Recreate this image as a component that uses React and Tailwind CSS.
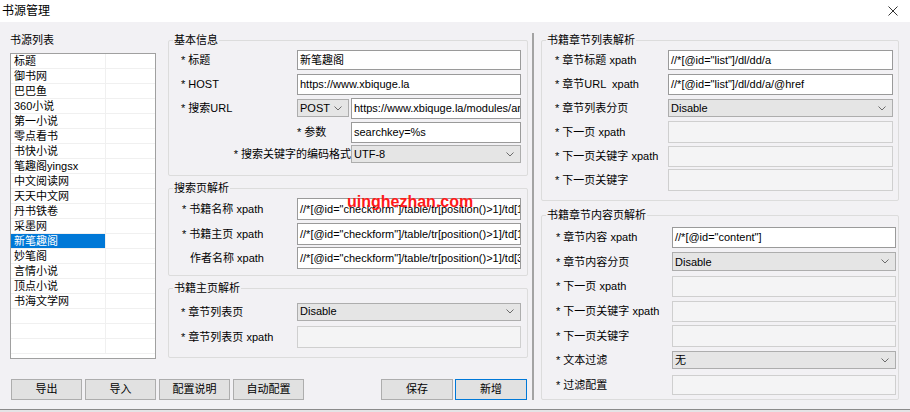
import React from "react";

const listItems = [
  "标题",
  "御书网",
  "巴巴鱼",
  "360小说",
  "第一小说",
  "零点看书",
  "书快小说",
  "笔趣阁yingsx",
  "中文阅读网",
  "天天中文网",
  "丹书铁卷",
  "采墨网",
  "新笔趣阁",
  "妙笔阁",
  "言情小说",
  "顶点小说",
  "书海文学网",
];

function Chevron() {
  return (
    <svg width="8" height="5" viewBox="0 0 8 5" className="shrink-0">
      <polyline points="0.5,0.5 4,4 7.5,0.5" fill="none" stroke="#6b6b6b" strokeWidth="1" />
    </svg>
  );
}

function TextBox({ value, className = "" }) {
  return (
    <div
      className={
        "flex min-w-0 items-center overflow-hidden whitespace-nowrap border border-[#9a9a9a] bg-white pl-[2px] " +
        className
      }
    >
      <span className="whitespace-pre">{value}</span>
    </div>
  );
}

function SelectBox({ value, className = "" }) {
  return (
    <div
      className={
        "flex min-w-0 items-center justify-between overflow-hidden whitespace-nowrap border border-[#adadad] bg-[#e5e5e5] pl-[2px] pr-[6px] " +
        className
      }
    >
      <span>{value}</span>
      <Chevron />
    </div>
  );
}

function Disabled({ className = "" }) {
  return <div className={"min-w-0 border border-[#cfcfcf] bg-[#f4f4f5] " + className} />;
}

function Label({ children, className = "" }) {
  return <div className={"shrink-0 whitespace-pre leading-[16px] " + className}>{children}</div>;
}

function Group({ title, className = "", children }) {
  return (
    <fieldset className={"min-w-0 rounded-[2px] border border-[#dcdcdc] " + className}>
      <legend className="ml-[4px] px-[1px] text-[11px] leading-[16px]">{title}</legend>
      {children}
    </fieldset>
  );
}

function Btn({ children, className = "" }) {
  return (
    <div
      className={
        "flex h-[21px] items-center justify-center border bg-[#e1e1e1] text-[11px] " + className
      }
    >
      {children}
    </div>
  );
}

export default function App() {
  const rows = [];
  for (let i = 0; i < 20; i++) {
    const name = listItems[i] || "";
    const sel = i === 12;
    rows.push(
      <div key={i} className="flex h-[15px] shrink-0 border-b border-[#f0f0f0]">
        <div
          className={
            "flex w-[95px] items-center border-r border-[#f0f0f0] pl-[3px] leading-[14px] " +
            (sel ? "bg-[#0078d7] text-white" : "")
          }
        >
          {name}
        </div>
        <div className="flex-1" />
      </div>
    );
  }

  return (
    <div className="relative flex h-[412px] w-[910px] flex-col overflow-hidden bg-[#f2f1f4] font-['Liberation_Sans','Noto_Sans_CJK_SC',sans-serif] text-[11px] text-black">
      {/* title bar */}
      <div className="flex h-[22px] shrink-0 items-center justify-between bg-white pl-[2px] pr-[12px]">
        <span className="text-[12px] leading-[16px]">书源管理</span>
        <svg width="10" height="10" viewBox="0 0 10 10">
          <line x1="0.5" y1="0.5" x2="9.5" y2="9.5" stroke="#333" strokeWidth="1" />
          <line x1="9.5" y1="0.5" x2="0.5" y2="9.5" stroke="#333" strokeWidth="1" />
        </svg>
      </div>

      {/* main */}
      <div className="flex h-[387px] shrink-0">
        {/* left + middle */}
        <div className="flex w-[532px] shrink-0 flex-col">
          <div className="flex">
            {/* list */}
            <div className="ml-[10px] mt-[10px] flex w-[146px] shrink-0 flex-col">
              <div className="leading-[16px]">书源列表</div>
              <div className="mt-[5px] flex h-[306px] flex-col overflow-hidden border border-[#a0a0a0] bg-white">
                {rows}
              </div>
            </div>

            {/* middle groups */}
            <div className="ml-[12px] mt-[10px] flex w-[360px] shrink-0 flex-col">
              <Group title="基本信息" className="h-[144px]">
                <div className="flex flex-col pl-[12px] pr-[6px]">
                  <div className="flex h-[24px] items-center">
                    <Label className="w-[116px]">* 标题</Label>
                    <TextBox value="新笔趣阁" className="h-[20px] flex-1" />
                  </div>
                  <div className="flex h-[24px] items-center">
                    <Label className="w-[116px]">* HOST</Label>
                    <TextBox value="https://www.xbiquge.la" className="h-[21px] flex-1" />
                  </div>
                  <div className="flex h-[24px] items-center">
                    <Label className="w-[116px]">* 搜索URL</Label>
                    <SelectBox value="POST" className="h-[18px] w-[52px] shrink-0" />
                    <TextBox
                      value="https://www.xbiquge.la/modules/article/search.php"
                      className="ml-[2px] h-[21px] flex-1"
                    />
                  </div>
                  <div className="flex h-[24px] items-center">
                    <div className="w-[116px] shrink-0" />
                    <Label className="w-[54px]">* 参数</Label>
                    <TextBox value="searchkey=%s" className="h-[21px] flex-1" />
                  </div>
                  <div className="flex h-[20px] items-center">
                    <Label className="w-[170px] text-right">* 搜索关键字的编码格式</Label>
                    <SelectBox value="UTF-8" className="h-[18px] flex-1" />
                  </div>
                </div>
              </Group>

              <Group title="搜索页解析" className="mt-[4px] h-[96px]">
                <div className="flex flex-col pl-[13px] pr-[6px] pt-[1px]">
                  <div className="flex h-[24.5px] items-center">
                    <Label className="w-[115px]">* 书籍名称 xpath</Label>
                    <TextBox
                      value={'//*[@id="checkform"]/table/tr[position()>1]/td[1]/a'}
                      className="h-[22px] flex-1"
                    />
                  </div>
                  <div className="flex h-[24.5px] items-center">
                    <Label className="w-[115px]">* 书籍主页 xpath</Label>
                    <TextBox
                      value={'//*[@id="checkform"]/table/tr[position()>1]/td[1]/a/@href'}
                      className="h-[22px] flex-1"
                    />
                  </div>
                  <div className="flex h-[24.5px] items-center">
                    <Label className="w-[115px] pl-[8px]">作者名称 xpath</Label>
                    <TextBox
                      value={'//*[@id="checkform"]/table/tr[position()>1]/td[3]'}
                      className="h-[22px] flex-1"
                    />
                  </div>
                </div>
              </Group>

              <Group title="书籍主页解析" className="mt-[4px] h-[78px]">
                <div className="flex flex-col pl-[12px] pr-[6px] pt-[3px]">
                  <div className="flex h-[25px] items-center">
                    <Label className="w-[116px]">* 章节列表页</Label>
                    <SelectBox value="Disable" className="h-[18px] flex-1" />
                  </div>
                  <div className="flex h-[25px] items-center">
                    <Label className="w-[116px]">* 章节列表页 xpath</Label>
                    <Disabled className="h-[22px] flex-1" />
                  </div>
                </div>
              </Group>
            </div>
          </div>

          {/* buttons */}
          <div className="mb-[9px] mt-auto flex pl-[11px]">
            <Btn className="w-[71px] border-[#adadad]">导出</Btn>
            <Btn className="ml-[3px] w-[71px] border-[#adadad]">导入</Btn>
            <Btn className="ml-[3px] w-[71px] border-[#adadad]">配置说明</Btn>
            <Btn className="ml-[3px] w-[71px] border-[#adadad]">自动配置</Btn>
            <Btn className="ml-[77px] w-[72px] border-[#adadad]">保存</Btn>
            <Btn className="ml-[2px] w-[72px] border-[#0078d7]">新增</Btn>
          </div>
        </div>

        {/* divider */}
        <div className="mb-[9px] mt-[11px] w-[2px] shrink-0 bg-[#a3a3a3]" />

        {/* right */}
        <div className="flex min-w-0 flex-1 flex-col pl-[7px] pt-[10px]">
          <Group title="书籍章节列表解析" className="h-[169px] w-[358px]">
            <div className="flex flex-col pl-[13px] pr-[5px]">
              <div className="flex h-[24px] items-center">
                <Label className="w-[113px]">* 章节标题 xpath</Label>
                <TextBox value={'//*[@id="list"]/dl/dd/a'} className="h-[20px] flex-1" />
              </div>
              <div className="flex h-[24px] items-center">
                <Label className="w-[113px]">{"* 章节URL  xpath"}</Label>
                <TextBox value={'//*[@id="list"]/dl/dd/a/@href'} className="h-[21px] flex-1" />
              </div>
              <div className="flex h-[24px] items-center">
                <Label className="w-[113px]">* 章节列表分页</Label>
                <SelectBox value="Disable" className="h-[18px] flex-1" />
              </div>
              <div className="flex h-[24px] items-center">
                <Label className="w-[113px]">* 下一页 xpath</Label>
                <Disabled className="h-[22px] flex-1" />
              </div>
              <div className="flex h-[24px] items-center">
                <Label className="w-[113px]">* 下一页关键字 xpath</Label>
                <Disabled className="h-[21px] flex-1" />
              </div>
              <div className="flex h-[24px] items-center">
                <Label className="w-[113px]">* 下一页关键字</Label>
                <Disabled className="h-[22px] flex-1" />
              </div>
            </div>
          </Group>

          <Group title="书籍章节内容页解析" className="mt-[6px] h-[193px] w-[358px]">
            <div className="flex flex-col pl-[14px] pr-[2px] pt-[2px]">
              <div className="flex h-[24.6px] items-center">
                <Label className="w-[116px]">* 章节内容 xpath</Label>
                <TextBox value={'//*[@id="content"]'} className="h-[21px] flex-1" />
              </div>
              <div className="flex h-[24.6px] items-center">
                <Label className="w-[116px]">* 章节内容分页</Label>
                <SelectBox value="Disable" className="h-[19px] flex-1" />
              </div>
              <div className="flex h-[24.6px] items-center">
                <Label className="w-[116px]">* 下一页 xpath</Label>
                <Disabled className="h-[21px] flex-1" />
              </div>
              <div className="flex h-[24.6px] items-center">
                <Label className="w-[116px]">* 下一页关键字 xpath</Label>
                <Disabled className="h-[21px] flex-1" />
              </div>
              <div className="flex h-[24.6px] items-center">
                <Label className="w-[116px]">* 下一页关键字</Label>
                <Disabled className="h-[22px] flex-1" />
              </div>
              <div className="flex h-[24.6px] items-center">
                <Label className="w-[116px]">* 文本过滤</Label>
                <SelectBox value="无" className="h-[18px] flex-1" />
              </div>
              <div className="flex h-[24.6px] items-center">
                <Label className="w-[116px]">* 过滤配置</Label>
                <Disabled className="h-[20px] flex-1" />
              </div>
            </div>
          </Group>
        </div>
      </div>

      {/* bottom edge */}
      <div className="h-[1px] shrink-0 bg-[#8a8a8a]" />
      <div className="flex-1 bg-[#e4e4e6]" />

      {/* watermark */}
      <div className="pointer-events-none absolute left-[347px] top-[193px] text-[16px] font-bold leading-[18px] text-[#ff1a1a]">
        uinghezhan.com
      </div>
    </div>
  );
}
